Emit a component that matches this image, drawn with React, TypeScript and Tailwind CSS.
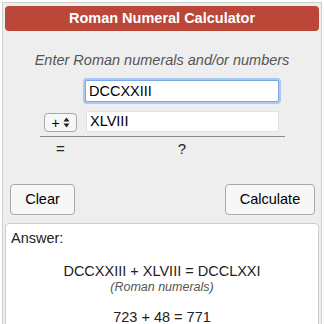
import React from "react";

export default function App() {
  return (
    <div className="w-[324px] h-[324px] overflow-hidden bg-white" style={{ fontFamily: '"Liberation Sans", Arial, sans-serif' }}>
      <div className="ml-[2px] mt-[2px] w-[320px] h-[330px] border border-[#cfcfcf] bg-[#eeeeee] px-[2px] pt-[3px]">
        <div className="h-[25px] rounded-[4px] bg-[#bb4738] text-white font-bold text-[14.5px] leading-[25px] text-center">
          Roman Numeral Calculator
        </div>
        <div className="mt-[20px] text-center italic text-[14.5px] leading-[18px] text-[#555]">
          Enter Roman numerals and/or numbers
        </div>
        <div className="mt-[11px] flex">
          <div className="ml-[80px] w-[194px] h-[22px] bg-white border border-[#7aa7e6] rounded-[2px] shadow-[0_0_0_2px_#a9c8f2] text-[14.5px] leading-[20px] text-black pl-[3px]">
            DCCXXIII
          </div>
        </div>
        <div className="mt-[9px] flex items-center">
          <div className="ml-[39px] w-[33px] h-[19px] mt-[2px] rounded-[4px] border border-[#a8a8a8] bg-[#f7f7f7] flex items-center justify-center gap-[3px] text-[14px] text-black">
            <span className="leading-none">+</span>
            <svg width="7" height="11" viewBox="0 0 7 11">
              <path d="M3.5 0.5 L6.5 4.5 L0.5 4.5 Z" fill="#222" />
              <path d="M3.5 10.5 L6.5 6.5 L0.5 6.5 Z" fill="#222" />
            </svg>
          </div>
          <div className="ml-[9px] w-[193px] h-[21px] bg-white border border-[#e2e2e2] text-[14.5px] leading-[19px] text-black pl-[3px]">
            XLVIII
          </div>
        </div>
        <div className="ml-[35px] mt-[4px] w-[245px] h-px bg-[#8a8a8a]" />
        <div className="flex mt-[3px] text-[15px] leading-[18px] text-[#222]">
          <span className="ml-[51px]">=</span>
          <span className="ml-[113px]">?</span>
        </div>
        <div className="mt-[26px] flex justify-between pl-[5px] pr-[4px]">
          <div className="w-[65px] h-[31px] rounded-[4px] border border-[#a9a9a9] bg-[#f7f7f7] text-[14.5px] leading-[29px] text-center text-black">
            Clear
          </div>
          <div className="w-[90px] h-[31px] rounded-[4px] border border-[#a9a9a9] bg-[#f7f7f7] text-[14.5px] leading-[29px] text-center text-black">
            Calculate
          </div>
        </div>
        <div className="mt-[8px] h-[120px] rounded-t-[4px] border border-[#cccccc] bg-white">
          <div className="pl-[5px] pt-[5px] text-[14.5px] leading-[18px] text-[#222]">Answer:</div>
          <div className="mt-[15px] text-center text-[14.5px] leading-[18px] text-[#222]">
            DCCXXIII + XLVIII = DCCLXXI
          </div>
          <div className="text-center italic text-[12.5px] leading-[15px] text-[#555]">(Roman numerals)</div>
          <div className="mt-[13px] text-center text-[14.5px] leading-[18px] text-[#222]">723 + 48 = 771</div>
        </div>
      </div>
    </div>
  );
}
